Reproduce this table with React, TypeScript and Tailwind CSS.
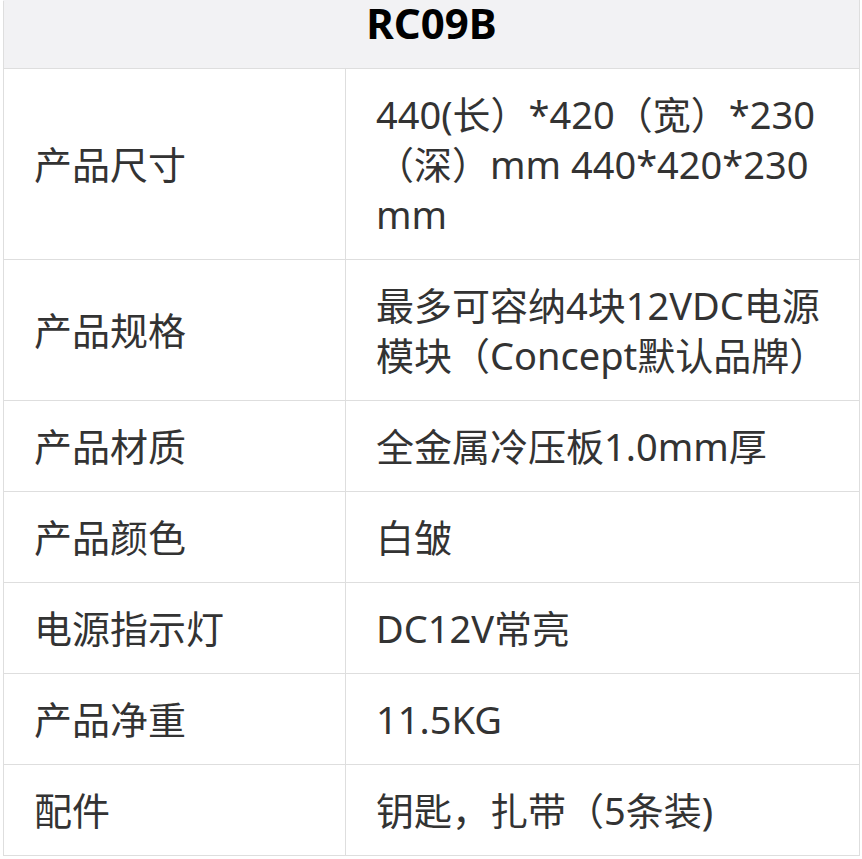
export default function App() {
  const rows: [string, string][] = [
    ["产品尺寸", "440(长）*420（宽）*230（深）mm 440*420*230 mm"],
    ["产品规格", "最多可容纳4块12VDC电源模块（Concept默认品牌）"],
    ["产品材质", "全金属冷压板1.0mm厚"],
    ["产品颜色", "白皱"],
    ["电源指示灯", "DC12V常亮"],
    ["产品净重", "11.5KG"],
    ["配件", "钥匙，扎带（5条装)"],
  ];
  return (
    <div
      className="bg-white pl-[3px] pt-0"
      style={{ fontFamily: '"Noto Sans", "Noto Sans CJK SC", sans-serif' }}
    >
      <table className="w-[857px] border-collapse table-fixed text-[#333] text-[38px] leading-[50px]">
        <colgroup>
          <col className="w-[342px]" />
          <col />
        </colgroup>
        <thead>
          <tr className="bg-[#f2f2f4]">
            <th
              colSpan={2}
              className="border border-[#dedede] border-t-[#f2f2f4] h-[68px] text-center font-bold text-[42px] text-black leading-[44px] p-0 align-top"
            >
              RC09B
            </th>
          </tr>
        </thead>
        <tbody>
          {rows.map(([k, v]) => (
            <tr key={k}>
              <td className="border border-[#dedede] px-[30px] py-[20px] align-middle">{k}</td>
              <td className="border border-[#dedede] px-[30px] py-[20px] align-middle break-words">{v}</td>
            </tr>
          ))}
        </tbody>
      </table>
    </div>
  );
}
